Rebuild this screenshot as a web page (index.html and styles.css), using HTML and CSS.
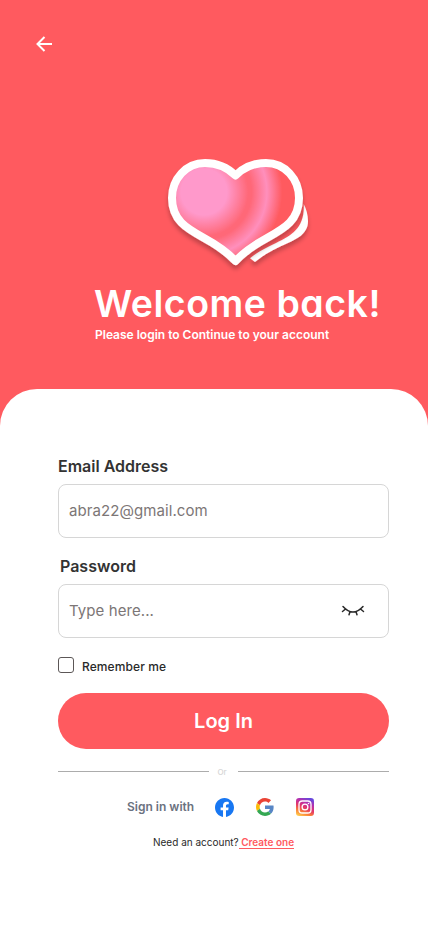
FILE: index.html
```html
<!DOCTYPE html>
<html lang="en">
<head>
<meta charset="utf-8">
<meta name="viewport" content="width=device-width, initial-scale=1">
<title>Log In</title>
<link rel="stylesheet" href="styles.css">
</head>
<body>
<main class="screen">
  <header class="hero">
    <a class="back" href="#" aria-label="Back">
      <svg width="18" height="18" viewBox="0 0 18 18" fill="none" stroke="#fff" stroke-width="2"><path d="M17 9H3M9.500 2L2.500 9L9.500 16"/></svg>
    </a>
    <svg class="logo" width="160" height="130" viewBox="0 0 160 130" aria-hidden="true">
      <defs>
        <radialGradient id="shine" gradientUnits="userSpaceOnUse" cx="44" cy="42" r="85">
          <stop offset="0.27" stop-color="#ff99cb"/>
          <stop offset="0.52" stop-color="#ff6878"/>
          <stop offset="0.56" stop-color="#ff6878"/>
          <stop offset="0.74" stop-color="#ff8fbc"/>
          <stop offset="0.92" stop-color="#ff5a5f"/>
        </radialGradient>
        <filter id="shadow" x="-20%" y="-20%" width="140%" height="150%">
          <feDropShadow dx="0" dy="4" stdDeviation="2" flood-color="#000" flood-opacity="0.25"/>
        </filter>
      </defs>
      <path filter="url(#shadow)" fill="#fff" d="M143.700 54C147 60 149 69 147.500 76C145 84 139 88 128 93C116 98 105 104 95 112L90 108.300C98 101.500 106 98 116 93C132 85 145 78 143.700 54Z"/>
      <path filter="url(#shadow)" fill="url(#shine)" stroke="#fff" stroke-width="8" stroke-linejoin="round" d="M75.500 25.500C68 18 57 13 45 13C26 13 12 29 12 48C12 70 26 78 44 88C56 94.500 66 101 75.500 111C85 101 95 94.500 107 88C125 78 139 70 139 48C139 29 125 13 106 13C94 13 83 18 75.500 25.500Z"/>
    </svg>
    <h1 class="title">Welcome back!</h1>
    <p class="subtitle">Please login to Continue to your account</p>
  </header>
  <form class="card">
    <label class="label" for="email">Email Address</label>
    <div class="field"><input class="input" id="email" type="email" placeholder="abra22@gmail.com"></div>
    <label class="label label-password" for="password">Password</label>
    <div class="field">
      <input class="input" id="password" type="password" placeholder="Type here...">
      <svg class="eye" width="24" height="12" viewBox="0 0 24 12" fill="none" stroke="#292929" stroke-width="1.5" stroke-linecap="round"><path d="M2 1.500Q12 12.500 22 1.500M4.500 4L1.500 6.500M9 6.700L8 9.800M15 6.700L16 9.800M19.500 4L22.500 6.500"/></svg>
    </div>
    <label class="remember"><input class="check" type="checkbox"><span class="remember-text">Remember me</span></label>
    <button class="login" type="button">Log In</button>
    <div class="divider"><span class="or">Or</span></div>
    <div class="social">
      <span class="social-text">Sign in with</span>
      <svg class="brand facebook" viewBox="0 0 24 24"><path fill="#1877f2" d="M24 12.073C24 5.405 18.627 0 12 0S0 5.405 0 12.073C0 18.100 4.388 23.094 10.125 24v-8.437H7.078v-3.490h3.047V9.413c0-3.026 1.792-4.697 4.533-4.697 1.312 0 2.686.236 2.686.236v2.971h-1.513c-1.491 0-1.956.931-1.956 1.886v2.264h3.328l-.532 3.490h-2.796V24C19.612 23.094 24 18.100 24 12.073z"/></svg>
      <svg class="brand" viewBox="0 0 48 48"><path fill="#ea4335" d="M24 9.500c3.540 0 6.710 1.220 9.210 3.600l6.850-6.850C35.900 2.380 30.470 0 24 0 14.620 0 6.510 5.380 2.560 13.220l7.980 6.190C12.430 13.720 17.740 9.500 24 9.500z"/><path fill="#5886c5" d="M46.980 24.550c0-1.570-.15-3.090-.38-4.550H24v9.020h12.940c-.58 2.960-2.260 5.480-4.780 7.180l7.730 6c4.510-4.180 7.090-10.360 7.090-17.650z"/><path fill="#fbbc05" d="M10.530 28.590A14.500 14.500 0 0 1 9.770 24c0-1.600.27-3.140.76-4.590l-7.980-6.190A24 24 0 0 0 0 24c0 3.880.92 7.540 2.560 10.780z"/><path fill="#34a853" d="M24 48c6.480 0 11.930-2.130 15.890-5.810l-7.730-6c-2.150 1.450-4.920 2.300-8.160 2.300-6.260 0-11.570-4.220-13.470-9.910l-7.980 6.190C6.510 42.620 14.620 48 24 48z"/></svg>
      <svg class="brand" viewBox="0 0 18 18">
        <defs>
          <linearGradient id="insta" x1="0.2" y1="1" x2="0.65" y2="0"><stop offset="0" stop-color="#ffc94d"/><stop offset="0.25" stop-color="#fa7c38"/><stop offset="0.5" stop-color="#e2356c"/><stop offset="0.75" stop-color="#b72fad"/><stop offset="1" stop-color="#6847dc"/></linearGradient>
        </defs>
        <rect width="18" height="18" rx="3.200" fill="url(#insta)"/>
        <g fill="none" stroke="#fff" stroke-width="1.300"><rect x="3" y="3" width="12" height="12" rx="3.300"/><circle cx="9" cy="9" r="2.900"/></g>
        <circle cx="12.500" cy="5.500" r=".8" fill="#fff"/>
      </svg>
    </div>
    <p class="signup">Need an account?<a class="create" href="#"> Create one</a></p>
  </form>
</main>
</body>
</html>
```

FILE: styles.css
```css
* { box-sizing: border-box; }

body {
  margin: 0;
  font-family: Inter, "Liberation Sans", sans-serif;
}

.screen {
  width: 428px;
  height: 926px;
  overflow: hidden;
  background: #ff5a5f;
  display: flex;
  flex-direction: column;
}

.hero {
  height: 389px;
  flex: none;
  padding: 35px 0 0 35px;
  display: flex;
  flex-direction: column;
  align-items: flex-start;
}

.back { display: block; width: 18px; height: 18px; }
.back svg { display: block; }

.logo {
  display: block;
  flex: none;
  margin: 97px 0 0 125px;
}

.title {
  margin: 0 0 0 59px;
  font-size: 37.500px;
  line-height: 47px;
  font-weight: 600;
  letter-spacing: 0.5px;
  font-feature-settings: "cv11";
  color: #fff;
  white-space: nowrap;
}

.subtitle {
  margin: 0 0 0 60px;
  font-size: 12px;
  line-height: 15px;
  font-weight: 600;
  color: #fff;
  white-space: nowrap;
}

.card {
  flex: 1;
  padding: 67px 39px 0 58px;
  background: #fff;
  border-radius: 37px 37px 0 0;
  display: flex;
  flex-direction: column;
}

.label {
  font-size: 16px;
  line-height: 20px;
  font-weight: 600;
  color: #333;
}
.label-password { margin: 18px 0 0 2px; }

.field {
  height: 54px;
  margin-top: 8px;
  padding: 0 23px 0 10px;
  border: 1px solid #d6d6d6;
  border-radius: 8px;
  display: flex;
  align-items: center;
}

.input {
  flex: 1;
  min-width: 0;
  padding: 0;
  border: 0;
  outline: 0;
  background: transparent;
  font: 400 15px/20px Inter, sans-serif;
  letter-spacing: 0.08px;
}
.input::placeholder { color: #7c7676; opacity: 1; }
.eye { display: block; flex: none; }

.remember {
  margin-top: 19px;
  height: 18px;
  display: flex;
  gap: 8px;
}
.check {
  appearance: none;
  width: 16px;
  height: 16px;
  margin: 0;
  border: 1px solid #5c5757;
  border-radius: 3px;
}
.remember-text {
  padding-top: 2px;
  font-size: 12px;
  line-height: 15px;
  font-weight: 500;
  letter-spacing: 0.1px;
  color: #292929;
}

.login {
  height: 56px;
  margin-top: 18px;
  padding: 0;
  border: 0;
  border-radius: 28px;
  background: #ff5a5f;
  color: #fff;
  font: 600 20px/24px Inter, sans-serif;
}

.divider {
  height: 11px;
  margin-top: 17px;
  display: flex;
  align-items: center;
}
.divider::before,
.divider::after {
  content: "";
  flex: 1;
  height: 1px;
  background: #acacac;
}
.or {
  width: 29px;
  padding-right: 3px;
  text-align: center;
  font-size: 8px;
  line-height: 12px;
  font-weight: 500;
  color: #d6d6d6;
}

.social {
  height: 20px;
  margin: 20px 0 0 69px;
  display: flex;
  align-items: center;
}
.social-text {
  width: 88px;
  font-size: 12px;
  line-height: 16px;
  font-weight: 600;
  color: #6b7280;
}
.brand { width: 18px; height: 18px; margin-right: 22px; }
.facebook { width: 19px; height: 19px; }

.signup {
  margin: 18px 0 0 95px;
  font-size: 10px;
  line-height: 14px;
  color: #292929;
  white-space: nowrap;
}
.create {
  display: inline-block;
  height: 14px;
  border-bottom: 1px solid #ff5a5f;
  color: #ff5a5f;
  font-weight: 600;
  text-decoration: none;
  white-space: pre;
}
```
